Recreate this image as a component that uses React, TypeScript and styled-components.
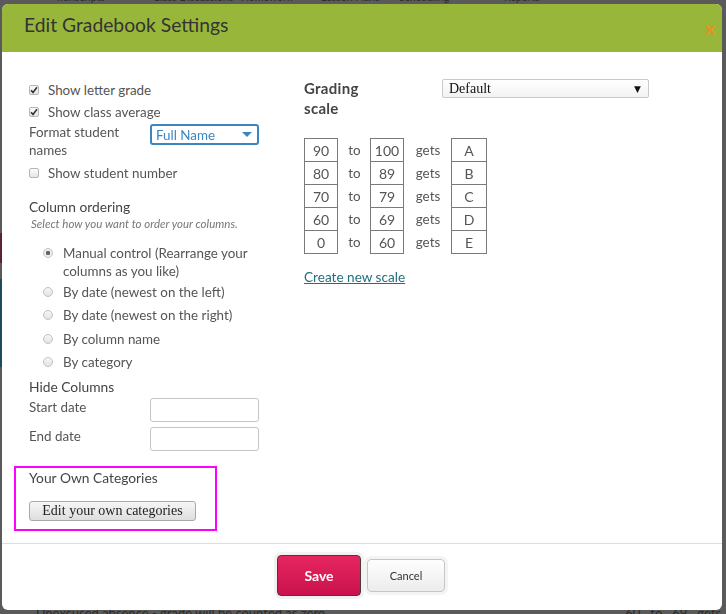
import React from "react";
import styled, { createGlobalStyle } from "styled-components";

const Global = createGlobalStyle`
  html, body { margin: 0; padding: 0; }
  body {
    width: 726px;
    height: 614px;
    overflow: hidden;
    background: #5a5a5a;
    font-family: Lato, "Open Sans", Arial, sans-serif;
  }
`;

/* ---------- dimmed page behind the dialog ---------- */

const Page = styled.div`
  height: 614px;
  display: flex;
  flex-direction: column;
  color: #262626;
  font-size: 13px;
`;

const Nav = styled.div`
  display: flex;
  margin-top: -9px;
  padding-left: 55px;
  height: 13px;
  line-height: 13px;
  font-size: 10.5px;
  color: #2e2e2e;
  white-space: nowrap;
  overflow: hidden;
`;

const NavItem = styled.span<{ $w: number }>`
  width: ${(p) => p.$w}px;
  flex: none;
  overflow: hidden;
`;

const PageMain = styled.div`
  flex: 1;
  display: flex;
  flex-direction: column;
  padding-top: 229px;
`;

const SideBlock = styled.div<{ $h: number; $c: string; $mt?: number }>`
  width: 2px;
  height: ${(p) => p.$h}px;
  background: ${(p) => p.$c};
  margin-top: ${(p) => p.$mt ?? 0}px;
`;

const PageFoot = styled.div`
  display: flex;
  height: 8px;
  line-height: 14px;
  padding-left: 36px;
  color: #2b2b2b;
  font-size: 13px;
  gap: 300px;
  white-space: nowrap;
  overflow: hidden;
`;

/* ---------- dialog ---------- */

const Modal = styled.div`
  position: fixed;
  left: 2px;
  top: 4px;
  width: 720px;
  height: 606px;
  background: #fff;
  border-radius: 6px;
  overflow: hidden;
  display: flex;
  flex-direction: column;
  color: #555;
`;

const Header = styled.div`
  height: 48px;
  flex: none;
  background: #98b73a;
  display: flex;
  align-items: center;
  justify-content: space-between;
  padding: 0 5px 0 22px;
`;

const Title = styled.h1`
  margin: -7px 0 0 0;
  font-size: 19.3px;
  font-weight: 400;
  color: #333;
`;

const Close = styled.span`
  color: #f28b1d;
  font-size: 16px;
  font-weight: 700;
  line-height: 1;
  margin-top: 3px;
  font-family: "DejaVu Sans", sans-serif;
`;

const Body = styled.div`
  flex: 1;
  min-height: 0;
  display: flex;
  padding: 28px 0 0 27px;
  gap: 45px;
`;

const LeftCol = styled.div`
  width: 230px;
  margin-top: -1px;
  display: flex;
  flex-direction: column;
  font-size: 13.4px;
`;

const CheckRow = styled.label`
  display: flex;
  align-items: center;
  height: 22px;
  gap: 9px;
`;

const Check = styled.span`
  width: 10px;
  height: 10px;
  box-sizing: border-box;
  border: 1px solid #b5b5b5;
  border-radius: 2px;
  background: linear-gradient(#fbfbfb, #e6e6e6);
  display: flex;
  align-items: center;
  justify-content: center;
  flex: none;
`;

const FormatRow = styled.div`
  display: flex;
  justify-content: space-between;
  align-items: flex-start;
  height: 39px;
`;

const FormatLabel = styled.div`
  width: 100px;
  line-height: 18px;
`;

const BlueSelect = styled.div`
  width: 109px;
  height: 21px;
  box-sizing: border-box;
  border: 2px solid #3a86c3;
  border-radius: 3px;
  display: flex;
  align-items: center;
  justify-content: space-between;
  padding: 0 5px 0 4px;
  color: #3a86c3;
  font-size: 13.4px;
  margin-top: 1px;
`;

const Caret = styled.span`
  width: 0;
  height: 0;
  border-left: 5px solid transparent;
  border-right: 5px solid transparent;
  border-top: 5px solid #3a86c3;
`;

const Heading = styled.div<{ $mt: number }>`
  font-size: 13.8px;
  color: #444;
  line-height: 20px;
  margin-top: ${(p) => p.$mt}px;
`;

const Hint = styled.div`
  font-size: 11.5px;
  font-style: italic;
  color: #777;
  line-height: 14px;
  margin-left: 2px;
`;

const RadioList = styled.div`
  display: flex;
  flex-direction: column;
  gap: 5.5px;
  padding-left: 14px;
  margin-top: 13px;
`;

const RadioRow = styled.label<{ $first?: boolean }>`
  display: flex;
  align-items: flex-start;
  gap: 10px;
  line-height: 18px;
  margin-bottom: ${(p) => (p.$first ? -3 : 0)}px;
`;

const Radio = styled.span<{ $on?: boolean }>`
  width: 10px;
  height: 10px;
  margin-top: 4px;
  box-sizing: border-box;
  border-radius: 50%;
  border: 1px solid #c2c2c2;
  background: ${(p) =>
    p.$on
      ? "radial-gradient(circle, #666 0 2px, #eee 2.5px)"
      : "linear-gradient(#f6f6f6, #e3e3e3)"};
  flex: none;
`;

const DateGrid = styled.div`
  display: grid;
  grid-template-columns: 121px 109px;
  row-gap: 5px;
  margin-top: 1px;
`;

const DateLabel = styled.span`
  line-height: 18px;
`;

const TextBox = styled.div`
  height: 24px;
  box-sizing: border-box;
  border: 1px solid #c4c4c4;
  border-radius: 3px;
`;

const Highlight = styled.div`
  margin: 15px 0 0 -15px;
  width: 203px;
  height: 65px;
  box-sizing: border-box;
  border: 2px solid #ff00ff;
  padding: 0 0 0 13px;
  display: flex;
  flex-direction: column;
`;

const PlainButton = styled.button`
  margin-top: 13px;
  width: 167px;
  height: 20px;
  padding: 0;
  border: 1px solid #aaa;
  border-radius: 3px;
  background: linear-gradient(#f6f6f6, #dedede);
  font-family: "Liberation Serif", "Times New Roman", serif;
  font-size: 14px;
  color: #222;
  line-height: 18px;
`;

const RightCol = styled.div`
  width: 345px;
  display: flex;
  flex-direction: column;
`;

const ScaleTop = styled.div`
  display: flex;
  justify-content: space-between;
  align-items: flex-start;
`;

const ScaleLabel = styled.div`
  width: 80px;
  font-size: 15px;
  font-weight: 700;
  color: #444;
  line-height: 20px;
  margin-top: -2px;
  letter-spacing: 0.3px;
`;

const GreySelect = styled.div`
  width: 207px;
  height: 19px;
  box-sizing: border-box;
  border: 1px solid #c9c9c9;
  border-radius: 2px;
  background: linear-gradient(#fff, #f2f2f2);
  display: flex;
  align-items: center;
  justify-content: space-between;
  padding: 0 7px 0 6px;
  font-family: "Liberation Serif", "Times New Roman", serif;
  font-size: 14px;
  color: #111;
  margin-top: -1px;
`;

const SmallArrow = styled.span`
  font-size: 9px;
  font-family: "DejaVu Sans", sans-serif;
  color: #111;
`;

const ScaleTable = styled.div`
  display: grid;
  grid-template-columns: 34px 32px 34px 47px 36px;
  margin-top: 20px;
  width: max-content;
`;

const Cell = styled.div<{ $last?: boolean }>`
  height: ${(p) => (p.$last ? 24 : 23)}px;
  box-sizing: border-box;
  border: 1px solid #7a7a7a;
  border-bottom: ${(p) => (p.$last ? "1px solid #7a7a7a" : "none")};
  display: flex;
  align-items: center;
  justify-content: center;
  font-size: 14px;
  color: #555;
`;

const Word = styled.div<{ $last?: boolean }>`
  height: ${(p) => (p.$last ? 24 : 23)}px;
  display: flex;
  align-items: center;
  justify-content: center;
  font-size: 13.4px;
  color: #555;
  padding-left: 1px;
`;

const ScaleLink = styled.a`
  margin-top: 14px;
  font-size: 13.6px;
  color: #1f6f7d;
  text-decoration: underline;
  line-height: 18px;
  align-self: flex-start;
`;

const Footer = styled.div`
  height: 67px;
  box-sizing: border-box;
  flex: none;
  border-top: 1px solid #dedede;
  display: flex;
  justify-content: center;
  align-items: center;
  gap: 6px;
  padding: 0 0 3px 0;
  margin-left: -2px;
`;

const SaveButton = styled.button`
  width: 84px;
  height: 41px;
  border: 1px solid #4a3a3f;
  border-radius: 4px;
  background: linear-gradient(#e6265f, #c9124d);
  color: #fff;
  font-family: Lato, Arial, sans-serif;
  font-weight: 700;
  font-size: 14px;
  box-shadow: 0 0 0 3px #f2f2f2;
`;

const CancelButton = styled.button`
  width: 78px;
  height: 33px;
  border: 1px solid #c6c6c6;
  border-radius: 4px;
  background: linear-gradient(#fefefe, #ececec);
  color: #333;
  font-family: Lato, Arial, sans-serif;
  font-size: 11px;
  box-shadow: 0 0 0 3px #f4f4f4;
`;

const CheckMark = () => (
  <svg width="8" height="8" viewBox="0 0 8 8">
    <path d="M1 4.2 L3 6.4 L7 1.2" fill="none" stroke="#333" strokeWidth="1.6" />
  </svg>
);

const scale = [
  ["90", "100", "A"],
  ["80", "89", "B"],
  ["70", "79", "C"],
  ["60", "69", "D"],
  ["0", "60", "E"],
];

const orderings = [
  "By date (newest on the left)",
  "By date (newest on the right)",
  "By column name",
  "By category",
];

export default function App() {
  return (
    <>
      <Global />
      <Page>
        <Nav>
          <NavItem $w={98}>Transcripts</NavItem>
          <NavItem $w={88}>Class Discussions</NavItem>
          <NavItem $w={80}>Homework</NavItem>
          <NavItem $w={78}>Lesson Plans</NavItem>
          <NavItem $w={105}>Scheduling</NavItem>
          <NavItem $w={60}>Reports</NavItem>
        </Nav>
        <PageMain>
          <SideBlock $h={30} $c="#5b2336" />
          <SideBlock $h={88} $c="#1d4b5c" $mt={16} />
        </PageMain>
        <PageFoot>
          <span>Unexcused absence - grade will be counted as zero</span>
          <span>60 &nbsp; to &nbsp; 69 &nbsp; gets &nbsp; D</span>
        </PageFoot>
      </Page>

      <Modal>
        <Header>
          <Title>Edit Gradebook Settings</Title>
          <Close>×</Close>
        </Header>

        <Body>
          <LeftCol>
            <CheckRow>
              <Check><CheckMark /></Check>
              Show letter grade
            </CheckRow>
            <CheckRow>
              <Check><CheckMark /></Check>
              Show class average
            </CheckRow>
            <FormatRow>
              <FormatLabel>Format student names</FormatLabel>
              <BlueSelect>
                Full Name
                <Caret />
              </BlueSelect>
            </FormatRow>
            <CheckRow>
              <Check />
              Show student number
            </CheckRow>

            <Heading $mt={13}>Column ordering</Heading>
            <Hint>Select how you want to order your columns.</Hint>
            <RadioList>
              <RadioRow $first>
                <Radio $on />
                <span>
                  Manual control (Rearrange your
                  <br />
                  columns as you like)
                </span>
              </RadioRow>
              {orderings.map((o) => (
                <RadioRow key={o}>
                  <Radio />
                  <span>{o}</span>
                </RadioRow>
              ))}
            </RadioList>

            <Heading $mt={6}>Hide Columns</Heading>
            <DateGrid>
              <DateLabel>Start date</DateLabel>
              <TextBox />
              <DateLabel>End date</DateLabel>
              <TextBox />
            </DateGrid>

            <Highlight>
              <Heading $mt={0}>Your Own Categories</Heading>
              <PlainButton>Edit your own categories</PlainButton>
            </Highlight>
          </LeftCol>

          <RightCol>
            <ScaleTop>
              <ScaleLabel>Grading scale</ScaleLabel>
              <GreySelect>
                Default
                <SmallArrow>▼</SmallArrow>
              </GreySelect>
            </ScaleTop>
            <ScaleTable>
              {scale.map(([from, to, grade], i) => {
                const last = i === scale.length - 1;
                return (
                  <React.Fragment key={grade}>
                    <Cell $last={last}>{from}</Cell>
                    <Word $last={last}>to</Word>
                    <Cell $last={last}>{to}</Cell>
                    <Word $last={last}>gets</Word>
                    <Cell $last={last}>{grade}</Cell>
                  </React.Fragment>
                );
              })}
            </ScaleTable>
            <ScaleLink href="#">Create new scale</ScaleLink>
          </RightCol>
        </Body>

        <Footer>
          <SaveButton>Save</SaveButton>
          <CancelButton>Cancel</CancelButton>
        </Footer>
      </Modal>
    </>
  );
}
